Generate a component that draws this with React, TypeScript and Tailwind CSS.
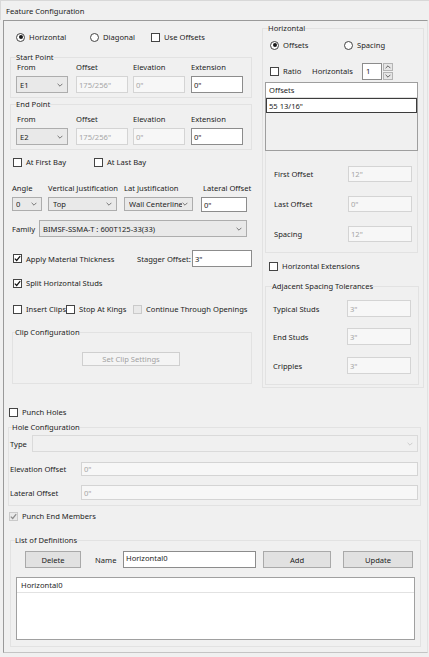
import type { ReactNode } from "react";
import clsx from "clsx";

function Chevron({ up = false, className }: { up?: boolean; className?: string }) {
  return (
    <svg width="6" height="4" viewBox="0 0 6 4" className={className}>
      <path
        d={up ? "M0.6 3.2 L3 0.8 L5.4 3.2" : "M0.6 0.8 L3 3.2 L5.4 0.8"}
        fill="none"
        stroke="currentColor"
        strokeWidth="0.9"
      />
    </svg>
  );
}

function Radio({ label, checked = false, className }: { label: string; checked?: boolean; className?: string }) {
  return (
    <div className={clsx("flex items-center gap-[4px]", className)}>
      <span className="flex h-[9px] w-[9px] shrink-0 items-center justify-center rounded-full border border-[#444] bg-white">
        {checked && <span className="h-[4px] w-[4px] rounded-full bg-[#1a1a1a]" />}
      </span>
      <span className="whitespace-nowrap">{label}</span>
    </div>
  );
}

function Check({
  label,
  checked = false,
  disabled = false,
  className,
}: {
  label: string;
  checked?: boolean;
  disabled?: boolean;
  className?: string;
}) {
  return (
    <div className={clsx("flex items-center gap-[4px]", className)}>
      <span
        className={clsx(
          "flex h-[9px] w-[9px] shrink-0 items-center justify-center border",
          disabled ? "border-[#cacaca] bg-[#e9e9e9] text-[#8d8d8d]" : "border-[#444] bg-white text-[#111]"
        )}
      >
        {checked && (
          <svg width="7" height="7" viewBox="0 0 7 7">
            <path d="M0.8 3.6 L2.7 5.5 L6.2 1.2" fill="none" stroke="currentColor" strokeWidth="1.2" />
          </svg>
        )}
      </span>
      <span className="whitespace-nowrap">{label}</span>
    </div>
  );
}

function TextBox({ value, disabled = false, className }: { value: string; disabled?: boolean; className?: string }) {
  return (
    <div
      className={clsx(
        "flex items-center overflow-hidden whitespace-nowrap border pl-[2px]",
        disabled ? "border-[#d4d4d4] bg-[#f7f7f7] text-[#a6a6a6]" : "border-[#8c8c8c] bg-white",
        className
      )}
    >
      {value}
    </div>
  );
}

function Combo({ value = "", disabled = false, className }: { value?: string; disabled?: boolean; className?: string }) {
  return (
    <div
      className={clsx(
        "flex items-center justify-between border pl-[3px] pr-[4px]",
        disabled ? "border-[#dadada] bg-[#f0f0f0] text-[#c4c4c4]" : "border-[#adadad] bg-[#e9e9e9]",
        className
      )}
    >
      <span className="min-w-0 flex-1 overflow-hidden whitespace-nowrap">{value}</span>
      <Chevron className={disabled ? "text-[#c8c8c8]" : "text-[#6a6a6a]"} />
    </div>
  );
}

function Btn({ label, disabled = false, className }: { label: string; disabled?: boolean; className?: string }) {
  return (
    <div
      className={clsx(
        "flex items-center justify-center border",
        disabled ? "border-[#cfcfcf] bg-[#f4f4f4] text-[#a2a2a2]" : "border-[#a9a9a9] bg-[#e1e1e1]",
        className
      )}
    >
      {label}
    </div>
  );
}

function Group({
  title,
  className,
  legendClass,
  children,
}: {
  title: string;
  className?: string;
  legendClass?: string;
  children: ReactNode;
}) {
  return (
    <fieldset className={clsx("border border-[#e2e2e2]", className)}>
      <legend className={clsx("h-[10px] leading-[10px] whitespace-nowrap", legendClass)}>{title}</legend>
      {children}
    </fieldset>
  );
}

function PointGroup({ title, from, className }: { title: string; from: string; className?: string }) {
  return (
    <Group title={title} className={clsx("px-[5px] pb-[4px]", className)}>
      <div className="grid h-[10px] grid-cols-[60px_57px_58px_52px] items-center">
        <span className="pl-[1px]">From</span>
        <span>Offset</span>
        <span>Elevation</span>
        <span>Extension</span>
      </div>
      <div className="mt-[4px] grid h-[17px] grid-cols-[60px_57px_58px_52px]">
        <Combo value={from} className="w-[52px]" />
        <TextBox value={'175/256"'} disabled className="w-[52px]" />
        <TextBox value={'0"'} disabled className="w-[52px]" />
        <TextBox value={'0"'} className="w-[52px]" />
      </div>
    </Group>
  );
}

function FieldRow({ label, value, className }: { label: string; value: string; className?: string }) {
  return (
    <div className={clsx("flex items-center", className)}>
      <span className="w-[74px]">{label}</span>
      <TextBox value={value} disabled className="h-full w-[64px]" />
    </div>
  );
}

export default function App() {
  return (
    <div className="flex h-[657px] w-[429px] flex-col overflow-hidden bg-[#f0f0f0] font-['Noto_Sans',sans-serif] text-[7.6px] leading-[10px] text-[#1c1c1c]">
      <div className="flex h-[20px] shrink-0 items-center border-l border-t border-[#d8d8d8] pl-[5px]">
        Feature Configuration
      </div>

      <div className="ml-[3px] mr-[1px] flex h-[633px] shrink-0 flex-col border border-b-[#c4c4c4] border-l-[#9a9a9a] border-r-[#e2e2e2] border-t-[#9a9a9a]">
        {/* upper block: left settings + right horizontal settings */}
        <div className="flex h-[367px] shrink-0">
          <div className="ml-[6px] flex w-[242px] flex-col">
            <div className="mt-[10px] flex h-[12px] items-center pl-[6px]">
              <Radio label="Horizontal" checked className="w-[74px]" />
              <Radio label="Diagonal" className="w-[61px]" />
              <Check label="Use Offsets" />
            </div>

            <PointGroup title="Start Point" from="E1" className="mt-[9px]" />
            <PointGroup title="End Point" from="E2" className="mt-[1px] [&>div:first-of-type]:mt-[5px]" />

            <div className="mt-[7px] flex h-[10px] items-center pl-[3px]">
              <Check label="At First Bay" className="w-[81px]" />
              <Check label="At Last Bay" />
            </div>

            <div className="mt-[16px] grid h-[10px] grid-cols-[36px_76px_77px_46px] items-center pl-[2px]">
              <span>Angle</span>
              <span>Vertical Justification</span>
              <span>Lat Justification</span>
              <span className="whitespace-nowrap pl-[2px]">Lateral Offset</span>
            </div>
            <div className="mt-[4px] grid h-[15px] grid-cols-[36px_76px_77px_46px] items-start pl-[2px]">
              <Combo value="0" className="h-[14px] w-[30px]" />
              <Combo value="Top" className="h-[14px] w-[69px] pl-[4px]" />
              <Combo value="Wall Centerline" className="h-[14px] w-[69px] pl-[4px]" />
              <TextBox value={'0"'} className="h-[15px] w-[46px]" />
            </div>

            <div className="mt-[8px] flex h-[17px] items-center pl-[2px]">
              <span className="w-[27px]">Family</span>
              <Combo value="BIMSF-SSMA-T : 600T125-33(33)" className="h-full w-[208px]" />
            </div>

            <div className="mt-[13px] flex h-[17px] items-center pl-[3px]">
              <Check label="Apply Material Thickness" checked className="w-[124px]" />
              <span className="w-[55px] whitespace-nowrap">Stagger Offset:</span>
              <TextBox value={'3"'} className="h-full w-[60px]" />
            </div>

            <div className="mt-[11px] flex h-[10px] items-center pl-[3px]">
              <Check label="Split Horizontal Studs" checked />
            </div>

            <div className="mt-[16px] flex h-[10px] items-center pl-[3px]">
              <Check label="Insert Clips" className="w-[53px]" />
              <Check label="Stop At Kings" className="w-[67px]" />
              <Check label="Continue Through Openings" disabled />
            </div>

            <Group
              title="Clip Configuration"
              className="ml-[2px] mt-[13px] w-[240px] px-[2px] pb-[17px]"
            >
              <Btn label="Set Clip Settings" disabled className="ml-[67px] mt-[15px] h-[14px] w-[98px]" />
            </Group>
          </div>

          <div className="ml-[10px] flex w-[162px] flex-col">
            <Group title="Horizontal" className="mt-[2px] h-[365px] px-[2px]" legendClass="ml-[3px]">
              <div className="mt-[7px] flex h-[10px] items-center pl-[5px]">
                <Radio label="Offsets" checked className="w-[74px]" />
                <Radio label="Spacing" />
              </div>

              <div className="mt-[13px] flex h-[16px] items-center pl-[5px]">
                <Check label="Ratio" className="w-[42px]" />
                <span className="w-[50px]">Horizontals</span>
                <div className="flex h-[17px]">
                  <div className="flex w-[20px] items-center border border-[#8c8c8c] bg-white pl-[3px]">1</div>
                  <div className="ml-[1px] flex w-[10px] flex-col gap-[1px]">
                    <span className="flex flex-1 items-center justify-center border border-[#b4b4b4] bg-[#e6e6e6] text-[#555]">
                      <Chevron up />
                    </span>
                    <span className="flex flex-1 items-center justify-center border border-[#b4b4b4] bg-[#e6e6e6] text-[#555]">
                      <Chevron />
                    </span>
                  </div>
                </div>
              </div>

              <div className="mt-[3px] flex h-[171px] w-[153px] flex-col border-x border-b border-[#e2e2e2]">
                <div className="-mx-px flex h-[69px] shrink-0 flex-col border border-[#9e9e9e]">
                  <div className="flex h-[15px] items-center border-b border-[#dedede] bg-white pl-[3px]">Offsets</div>
                  <div className="flex h-[15px] items-center border border-[#3c3c3c] bg-white pl-[2px]">55 13/16"</div>
                  <div className="flex-1 bg-[#f0f0f0]" />
                </div>
                <FieldRow label="First Offset" value={'12"'} className="mt-[15px] h-[16px] pl-[8px]" />
                <FieldRow label="Last Offset" value={'0"'} className="mt-[14px] h-[16px] pl-[8px]" />
                <FieldRow label="Spacing" value={'12"'} className="mt-[14px] h-[16px] pl-[8px]" />
              </div>

              <div className="mt-[8px] flex h-[10px] items-center pl-[4px]">
                <Check label="Horizontal Extensions" />
              </div>

              <Group
                title="Adjacent Spacing Tolerances"
                className="mt-[10px] w-[154px] px-[2px] pb-[10px]"
                legendClass="ml-[4px]"
              >
                <FieldRow label="Typical Studs" value={'3"'} className="mt-[9px] h-[17px] pl-[5px]" />
                <FieldRow label="End Studs" value={'3"'} className="mt-[11px] h-[17px] pl-[5px]" />
                <FieldRow label="Cripples" value={'3"'} className="mt-[12px] h-[17px] pl-[5px]" />
              </Group>
            </Group>
          </div>
        </div>

        {/* punch holes */}
        <div className="mt-[19px] flex h-[10px] items-center pl-[5px]">
          <Check label="Punch Holes" />
        </div>

        <Group
          title="Hole Configuration"
          className="ml-[4px] mt-[5px] w-[413px] pb-[5px] pl-[1px] pr-[2px]"
          legendClass="ml-[2px]"
        >
          <div className="mt-[3px] flex h-[17px] items-center">
            <span className="w-[22px]">Type</span>
            <Combo disabled className="h-full flex-1" />
          </div>
          <div className="mt-[10px] flex h-[14px] items-center">
            <span className="w-[71px]">Elevation Offset</span>
            <TextBox value={'0"'} disabled className="h-full flex-1" />
          </div>
          <div className="mt-[9px] flex h-[15px] items-center">
            <span className="w-[71px]">Lateral Offset</span>
            <TextBox value={'0"'} disabled className="h-full flex-1" />
          </div>
        </Group>

        <div className="mt-[5px] flex h-[10px] items-center pl-[5px]">
          <Check label="Punch End Members" checked disabled />
        </div>

        {/* saved definitions */}
        <Group
          title="List of Definitions"
          className="ml-[6px] mt-[14px] w-[411px] px-[3px] pb-[6px]"
          legendClass="ml-[1px]"
        >
          <div className="mt-[6px] flex h-[17px] items-center">
            <Btn label="Delete" className="ml-[11px] h-full w-[56px]" />
            <span className="ml-[14px] w-[28px]">Name</span>
            <TextBox value="Horizontal0" className="h-full w-[133px] items-start pt-[1px]" />
            <Btn label="Add" className="ml-[7px] h-full w-[68px]" />
            <Btn label="Update" className="ml-[12px] h-full w-[70px]" />
          </div>
          <div className="ml-[2px] mt-[9px] flex h-[63px] w-[399px] flex-col border border-[#a0a0a0] bg-white">
            <div className="flex h-[15px] items-center border-b border-[#e2e2e2] pl-[4px]">Horizontal0</div>
          </div>
        </Group>
      </div>
    </div>
  );
}
